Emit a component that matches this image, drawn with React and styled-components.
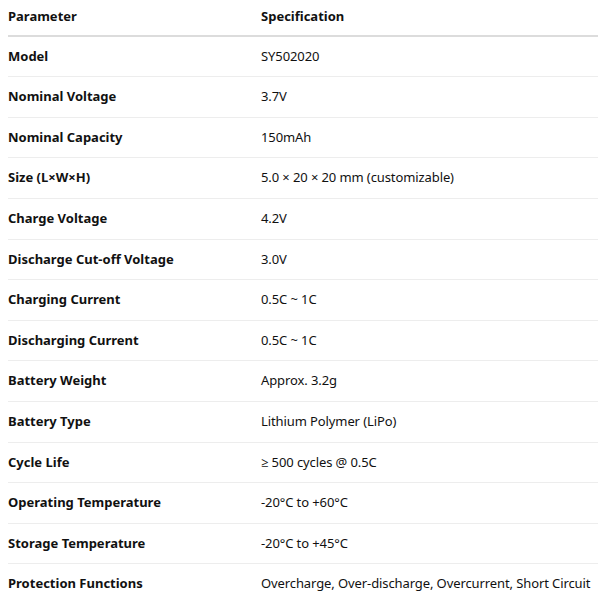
import React from 'react';
import styled, { createGlobalStyle } from 'styled-components';

const GlobalStyle = createGlobalStyle`
  html, body {
    margin: 0;
    padding: 0;
    background: #fff;
  }
  body {
    font-family: "Noto Sans", "Open Sans", Arial, sans-serif;
    color: #111;
  }
`;

const Wrapper = styled.div`
  padding: 0 0 0 8px;
  margin-top: -3px;
`;

const Table = styled.table`
  width: 590px;
  border-collapse: collapse;
  font-size: 13px;
  line-height: 19.6px;
`;

const HeadCell = styled.th`
  text-align: left;
  font-weight: 700;
  padding: 10px 0 8px;
  border-bottom: 2px solid #dcdcdc;
  width: ${(p) => p.width || 'auto'};
`;

const Row = styled.tr`
  border-bottom: 1px solid #ededed;
  &:last-child {
    border-bottom: none;
  }
`;

const Cell = styled.td`
  padding: 10px 0;
  font-weight: ${(p) => (p.bold ? 700 : 400)};
  letter-spacing: ${(p) => (p.bold ? '0' : '-0.1px')};
  white-space: nowrap;
`;

const specs = [
  ['Model', 'SY502020'],
  ['Nominal Voltage', '3.7V'],
  ['Nominal Capacity', '150mAh'],
  ['Size (L×W×H)', '5.0 × 20 × 20 mm (customizable)'],
  ['Charge Voltage', '4.2V'],
  ['Discharge Cut-off Voltage', '3.0V'],
  ['Charging Current', '0.5C ~ 1C'],
  ['Discharging Current', '0.5C ~ 1C'],
  ['Battery Weight', 'Approx. 3.2g'],
  ['Battery Type', 'Lithium Polymer (LiPo)'],
  ['Cycle Life', '≥ 500 cycles @ 0.5C'],
  ['Operating Temperature', '-20°C to +60°C'],
  ['Storage Temperature', '-20°C to +45°C'],
  ['Protection Functions', 'Overcharge, Over-discharge, Overcurrent, Short Circuit'],
];

const App = () => {
  return (
    <Wrapper>
      <GlobalStyle />
      <Table>
        <thead>
          <tr>
            <HeadCell width="253px">Parameter</HeadCell>
            <HeadCell>Specification</HeadCell>
          </tr>
        </thead>
        <tbody>
          {specs.map(([name, value]) => (
            <Row key={name}>
              <Cell bold>{name}</Cell>
              <Cell>{value}</Cell>
            </Row>
          ))}
        </tbody>
      </Table>
    </Wrapper>
  );
};

export default App;
